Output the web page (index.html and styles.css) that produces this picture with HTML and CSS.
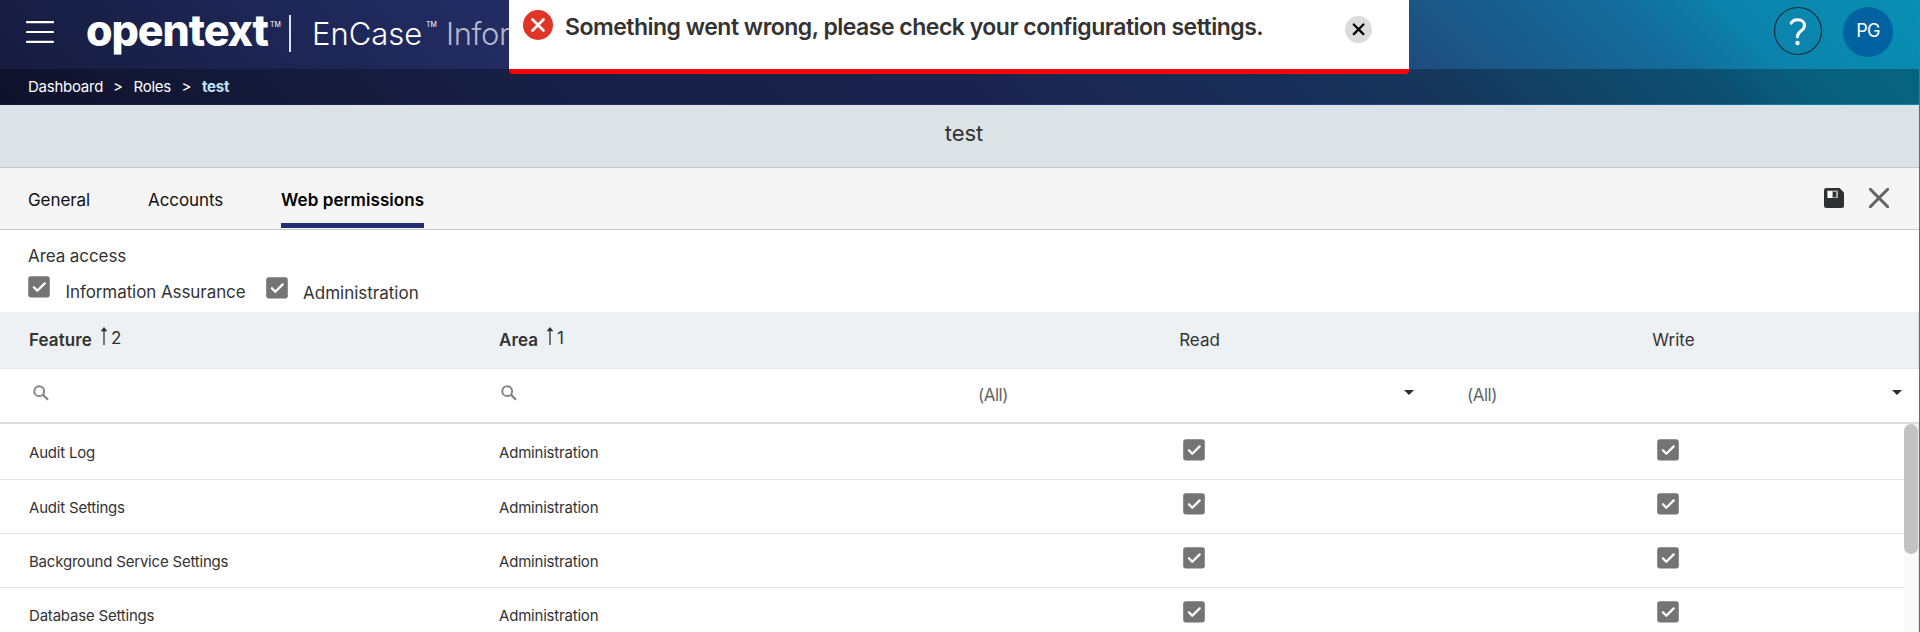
FILE: index.html
```html
<!DOCTYPE html>
<html lang="en">
<head>
<meta charset="utf-8">
<title>Roles - test</title>
<link rel="stylesheet" href="styles.css">
</head>
<body>
<svg class="defs" width="0" height="0" aria-hidden="true">
  <symbol id="check" viewBox="0 0 22 22"><rect x=".2" y=".2" width="21.6" height="21.2" rx="2.6" fill="#747474"/><path d="M5.9 11.2l3.4 3.5 7.4-7.3" fill="none" stroke="#fff" stroke-width="2.3" stroke-linecap="round" stroke-linejoin="round"/></symbol>
  <symbol id="search" viewBox="0 0 16 16"><circle cx="6.2" cy="6.2" r="4.9" fill="none" stroke="#858585" stroke-width="2"/><path d="M9.8 9.6L15 14.8" stroke="#858585" stroke-width="2.3"/></symbol>
  <symbol id="sort" viewBox="0 0 8 18"><path d="M4 3v15" stroke="#333" stroke-width="1.3"/><path d="M4 0l3.4 4.2H.6z" fill="#333"/></symbol>
</svg>
<div class="app">
  <header class="top">
    <div class="bar">
      <svg class="menu" width="28" height="24" viewBox="0 0 28 24"><path d="M1 2.2h26M1 12h26M1 21.8h26" stroke="#fff" stroke-width="2.2" stroke-linecap="round"/></svg>
      <span class="brand">opentext</span><span class="tm tm-brand">TM</span>
      <span class="divider"></span>
      <span class="product">EnCase</span><span class="tm tm-product">TM</span>
      <span class="product-sub">Infor</span>
      <div class="user-tools">
        <svg class="help" width="50" height="50" viewBox="0 0 50 50"><circle cx="25" cy="25" r="23.5" fill="none" stroke="#1d2b38" stroke-width="1.2"/><path d="M18.2 17.2c1.2-2.5 3.5-3.4 6.5-3.4 4.200 0 6.800 2.200 6.800 5.700 0 2.500-1.500 4-3.600 5.500-2.300 1.700-3.500 2.800-3.500 5.700" fill="none" stroke="#fff" stroke-width="3" stroke-linecap="round"/><circle cx="24.500" cy="37" r="2.200" fill="#fff"/></svg>
        <span class="avatar">PG</span>
      </div>
    </div>
    <nav class="crumbs"><a class="c1">Dashboard</a><span>&gt;</span><a class="c2">Roles</a><span>&gt;</span><b>test</b></nav>
  </header>
  <h1 class="title"><span>test</span></h1>
  <div class="tabs">
    <a class="tab general">General</a><a class="tab accounts">Accounts</a><a class="tab active">Web permissions</a>
    <div class="actions">
      <svg width="20" height="20" viewBox="0 0 20 20"><path d="M2.500 0H15.500L20 4.500V17.500Q20 20 17.500 20H2.500Q0 20 0 17.500V2.500Q0 0 2.500 0z" fill="#2f3033"/><rect x="3" y="2.500" width="11" height="7.500" fill="#a9a9a9"/><rect x="4" y="3.200" width="4" height="6.800" fill="#fff"/><rect x="9" y="4" width="3" height="5" fill="#2f3033"/></svg>
      <svg width="20" height="20" viewBox="0 0 20 20"><path d="M1.300 1.300l17.400 17.400M18.700 1.300L1.300 18.700" stroke="#636363" stroke-width="3" stroke-linecap="round"/></svg>
    </div>
  </div>
  <section class="access">
    <div class="access-title">Area access</div>
    <div class="options">
      <label class="option info"><svg class="box"><use href="#check"/></svg><span>Information Assurance</span></label>
      <label class="option admin"><svg class="box"><use href="#check"/></svg><span>Administration</span></label>
    </div>
  </section>
  <section class="table">
    <div class="row head">
      <div class="cell"><b class="feature">Feature</b><svg class="sort"><use href="#sort"/></svg><span class="order">2</span></div>
      <div class="cell"><b class="area">Area</b><svg class="sort"><use href="#sort"/></svg><span class="order">1</span></div>
      <div class="mid"><span>Read</span></div><div class="mid"><span>Write</span></div>
    </div>
    <div class="row filters">
      <div class="find"><svg class="search"><use href="#search"/></svg></div>
      <div class="find second"><svg class="search"><use href="#search"/></svg></div>
      <div class="select"><span>(All)</span><i class="caret"></i></div>
      <div class="select"><span>(All)</span><i class="caret"></i></div>
    </div>
    <div class="scroller">
      <div class="rows">
        <div class="row body first"><div class="cell">Audit Log</div><div class="cell">Administration</div><div class="mid"><svg class="box"><use href="#check"/></svg></div><div class="mid"><svg class="box"><use href="#check"/></svg></div></div>
        <div class="row body"><div class="cell">Audit Settings</div><div class="cell">Administration</div><div class="mid"><svg class="box"><use href="#check"/></svg></div><div class="mid"><svg class="box"><use href="#check"/></svg></div></div>
        <div class="row body"><div class="cell">Background Service Settings</div><div class="cell">Administration</div><div class="mid"><svg class="box"><use href="#check"/></svg></div><div class="mid"><svg class="box"><use href="#check"/></svg></div></div>
        <div class="row body"><div class="cell">Database Settings</div><div class="cell">Administration</div><div class="mid"><svg class="box"><use href="#check"/></svg></div><div class="mid"><svg class="box"><use href="#check"/></svg></div></div>
      </div>
      <div class="track"><div class="thumb"></div></div>
    </div>
  </section>
</div>
<div class="toast">
  <svg class="error" width="30" height="30" viewBox="0 0 30 30"><circle cx="15" cy="15" r="15" fill="#e03426"/><path d="M9.500 9.500l11 11M20.500 9.500l-11 11" stroke="#fff" stroke-width="2.700" stroke-linecap="round"/></svg>
  <span class="message">Something went wrong, please check your configuration settings.</span>
  <svg class="dismiss" width="27" height="27" viewBox="0 0 27 27"><circle cx="13.500" cy="13.500" r="13.500" fill="#dcdcdc"/><path d="M8.800 8.500l9.600 9.600M18.400 8.500l-9.600 9.600" stroke="#000" stroke-width="2.300" stroke-linecap="round"/></svg>
</div>
</body>
</html>
```
FILE: styles.css
```css
* { box-sizing: border-box; }
body { margin: 0; background: #fff; color: #333; font-family: Inter, "Liberation Sans", sans-serif; font-size: 17px; overflow: hidden; }
.defs { position: absolute; }
svg { display: block; flex: none; }
.app { width: 1920px; height: 632px; overflow: hidden; border-right: 1px solid #5c6a94; display: flex; flex-direction: column; }

.top { height: 105px; flex: none; background: linear-gradient(45deg, #161a3c 0%, #1b2450 14%, #222c62 28%, #25306c 48%, #22407a 64%, #1f4c7f 72%, #1a5888 76%, #136c9b 85%, #0b83ac 90%, #088fb3 100%); }
.bar { height: 69px; display: flex; align-items: flex-start; color: #fff; white-space: nowrap; }
.menu { margin: 20px 0 0 26px; }
.brand { width: 182px; margin: 4px 0 0 32px; font-size: 43px; line-height: 52px; font-weight: 800; letter-spacing: -1.1px; }
.tm { line-height: 10px; }
.tm-brand { width: 14px; margin: 20px 0 0 2px; font-size: 7px; }
.divider { width: 2px; height: 37px; margin: 15px 0 0 5px; background: #dfe2ec; }
.product { width: 112px; margin: 14px 0 0 21px; font-size: 31px; line-height: 40px; font-weight: 300; }
.tm-product { width: 12px; margin: 20px 0 0 2px; font-size: 7px; }
.product-sub { margin: 14px 0 0 8px; font-size: 31px; line-height: 40px; font-weight: 300; color: #b4b8cc; letter-spacing: -.4px; }
.user-tools { display: flex; margin-left: auto; margin-right: 26px; gap: 20px; }
.help { margin-top: 6px; }
.avatar { width: 50px; height: 50px; margin-top: 7px; border-radius: 50%; background: #0062a0; text-align: center; font-size: 18px; line-height: 47px; letter-spacing: -.8px; }
.crumbs { height: 35px; background: rgba(0, 0, 0, .28); color: #fff; display: flex; padding-left: 28px; font-size: 15px; line-height: 35px; letter-spacing: -.25px; }
.crumbs .c1 { width: 85px; }
.crumbs span { width: 20.500px; }
.crumbs .c2 { width: 48px; }
.crumbs b { color: #bfe4f4; }

.title { margin: 0; height: 63px; flex: none; background: #dce3e7; border-bottom: 1px solid #c3c7c9; font-size: 22px; font-weight: 400; line-height: 56px; text-align: center; padding-left: 9px; }
.tabs { height: 62px; flex: none; background: #f5f5f5; border-bottom: 1px solid #c8c9ca; display: flex; padding-left: 28px; color: #111; font-size: 17px; line-height: 64px; }
.tab { height: 60px; white-space: nowrap; letter-spacing: -.08px; }
.general { width: 120px; }
.accounts { width: 133px; }
.tab.active { width: 143px; color: #000; font-weight: 600; border-bottom: 5px solid #232e72; letter-spacing: .08px; }
.actions { margin: 20px 30px 0 auto; display: flex; gap: 25px; }

.access { height: 82px; flex: none; padding: 14px 0 0 28px; font-size: 17px; letter-spacing: -.08px; }
.access-title { line-height: 24px; height: 32px; }
.options { display: flex; }
.option { display: flex; }
.info { width: 237.500px; }
.admin { margin-top: 1px; }
.box { width: 22px; height: 22px; }
.option span { margin: 4px 0 0 15.500px; line-height: 24px; white-space: nowrap; }
.admin span { letter-spacing: 0; }

.row { display: grid; grid-template-columns: 470px 493px 473px 475px; }
.cell { padding-left: 29px; display: flex; }
.mid { display: flex; justify-content: center; }
.head { height: 57px; background: #edf1f4; border-bottom: 1px solid #e2e4e5; font-size: 17px; line-height: 56px; border-right: 1px solid #dcdfe1; }
.head b { font-weight: 600; letter-spacing: .1px; }
.feature { width: 71px; }
.area { width: 47px; }
.sort { width: 8px; height: 18px; margin-top: 15px; }
.order { margin-left: 3px; line-height: 52px; }
.filters { height: 55px; border-bottom: 2px solid #dcdcdc; grid-template-columns: 470px 493px 489px 466px; color: #666; line-height: 52px; letter-spacing: -.5px; }
.search { width: 16px; height: 16px; margin: 16px 0 0 33px; }
.second .search { margin-left: 31px; }
.select { display: flex; justify-content: space-between; padding: 0 38px 0 15px; }
.select:last-child { padding-right: 16px; }
.caret { width: 10px; height: 5px; margin-top: 21px; background: #2b2b2b; clip-path: polygon(0 0, 100% 0, 50% 100%); }
.scroller { display: flex; }
.rows { width: 1904px; }
.body { height: 54px; border-bottom: 1px solid #e3e3e3; grid-template-columns: 470px 487px 474px 473px; font-size: 15px; line-height: 56px; letter-spacing: -.2px; }
.body .box { margin-top: 13px; }
.first { height: 56px; line-height: 57px; }
.first .box { margin-top: 15px; }
.track { width: 15px; height: 220px; background: #fafafa; border-right: 1px solid #e4e4e4; }
.thumb { width: 14px; height: 130px; border-radius: 7px; background: #c2c2c2; }

.toast { position: absolute; left: 509px; top: 0; width: 900px; height: 74px; background: #fff; border-bottom: 5px solid #f00; border-radius: 0 0 4px 4px; display: flex; }
.error { margin: 10px 0 0 14px; }
.message { width: 701px; margin: 11px 0 0 12px; font-size: 23px; line-height: 32px; font-weight: 600; white-space: nowrap; letter-spacing: -.5px; }
.dismiss { margin: 16px 0 0 79px; }
```
